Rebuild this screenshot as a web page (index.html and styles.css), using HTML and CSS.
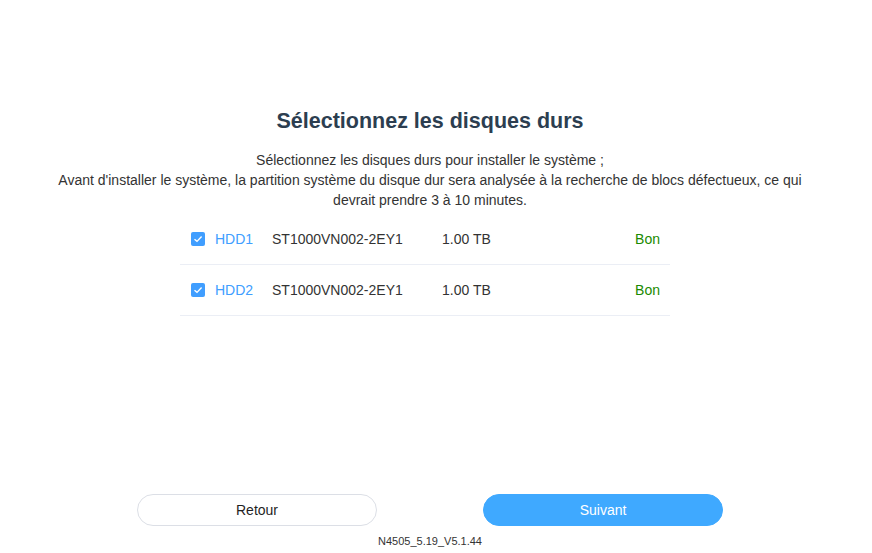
FILE: index.html
```html
<html lang="fr">
  <head>
    <title>Sélectionnez les disques durs</title>
    <meta charset="utf-8">
    <meta name="viewport" content="width=device-width, initial-scale=1.0">
    <link rel="stylesheet" href="styles.css">
  </head>

  <body>
    <div class="wrapper">
      <div class="content">
        <h1 class="title">Sélectionnez les disques durs</h1>
        <p class="desc">Sélectionnez les disques durs pour installer le système ;<br>Avant d'installer le système, la partition système du disque dur sera analysée à la recherche de blocs défectueux, ce qui devrait prendre 3 à 10 minutes.</p>

        <ul class="disks">
          <li class="disk">
            <span class="check"><svg width="10" height="8" viewBox="0 0 10 8"><path d="M1.5 4.2 L4 6.4 L8.6 1.6" fill="none" stroke="#fff" stroke-width="1.4"/></svg></span>
            <span class="disk__name">HDD1</span>
            <span class="disk__model">ST1000VN002-2EY1</span>
            <span class="disk__size">1.00 TB</span>
            <span class="disk__status">Bon</span>
          </li>
          <li class="disk">
            <span class="check"><svg width="10" height="8" viewBox="0 0 10 8"><path d="M1.5 4.2 L4 6.4 L8.6 1.6" fill="none" stroke="#fff" stroke-width="1.4"/></svg></span>
            <span class="disk__name">HDD2</span>
            <span class="disk__model">ST1000VN002-2EY1</span>
            <span class="disk__size">1.00 TB</span>
            <span class="disk__status">Bon</span>
          </li>
        </ul>
      </div>

      <div class="footer">
        <div class="buttons">
          <button class="btn btn--back">Retour</button>
          <button class="btn btn--next">Suivant</button>
        </div>
        <div class="version">N4505_5.19_V5.1.44</div>
      </div>
    </div>
  </body>
</html>
```

FILE: styles.css
```css
html, body {
  margin: 0;
  padding: 0;
}

body {
  width: 100%;
  height: 100vh;
  background-color: #fff;
  font-family: "Liberation Sans", Arial, sans-serif;
  color: #333;
}

.wrapper {
  width: 860px;
  height: 553px;
  display: flex;
  flex-direction: column;
  justify-content: space-between;
}

.content {
  padding-top: 107px;
}

.title {
  margin: 0;
  text-align: center;
  font-size: 21.5px;
  line-height: 28px;
  font-weight: bold;
  color: #2c3e50;
}

.desc {
  margin: 15px auto 0;
  max-width: 770px;
  text-align: center;
  font-size: 14px;
  line-height: 20px;
  color: #333;
}

.disks {
  list-style-type: none;
  margin: 4px 0 0 180px;
  padding: 0;
  width: 490px;
}

.disk {
  display: flex;
  align-items: center;
  height: 50px;
  border-bottom: 1px solid #ebeef5;
  font-size: 14px;
}

.check {
  width: 14px;
  height: 14px;
  margin-left: 11px;
  border-radius: 2px;
  background-color: #409eff;
  display: flex;
  align-items: center;
  justify-content: center;
}

.disk__name {
  margin-left: 10px;
  width: 57px;
  color: #409eff;
}

.disk__model {
  width: 170px;
}

.disk__size {
  flex: 1;
}

.disk__status {
  margin-right: 10px;
  color: #1a8a00;
}

.footer {
  padding-bottom: 5px;
}

.buttons {
  display: flex;
  justify-content: center;
  gap: 106px;
}

.btn {
  width: 240px;
  height: 32px;
  border-radius: 16px;
  font-family: "Liberation Sans", Arial, sans-serif;
  font-size: 14px;
  cursor: pointer;
}

.btn--back {
  background-color: #fff;
  border: 1px solid #dcdfe6;
  color: #1f1f1f;
}

.btn--next {
  background-color: #3fa9ff;
  border: 1px solid #3fa9ff;
  color: #fff;
}

.version {
  margin-top: 8px;
  text-align: center;
  font-size: 11px;
  line-height: 14px;
  color: #333;
}
```
